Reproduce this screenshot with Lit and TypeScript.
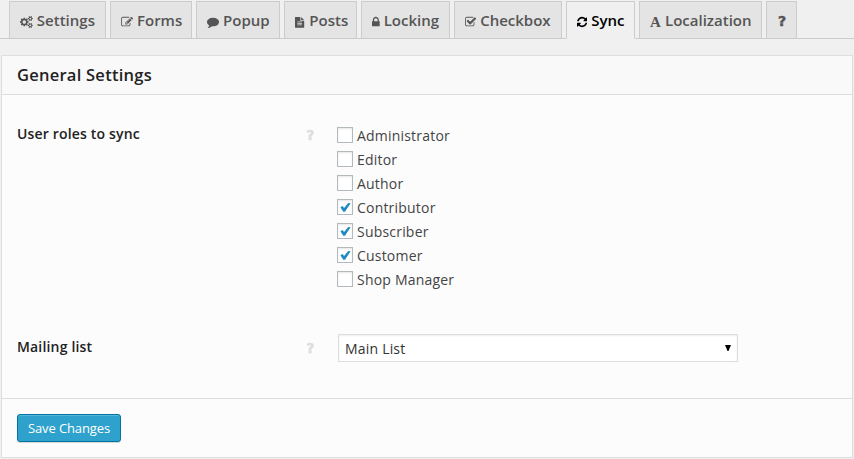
import { LitElement, html, css, svg, nothing } from "lit";
import { customElement, state } from "lit/decorators.js";

interface Icon {
  box: string;
  width: number;
  d: string;
}

const gear =
  "q0 16-149 31-12 27-30 52 51 113 51 138 0 4-4 7-122 71-124 71-8 0-46-47t-52-68q-20 2-30 2t-30-2q-14 21-52 68t-46 47q-2 0-124-71-4-3-4-7 0-25 51-138-18-25-30-52-149-15-149-31v-140q0-16 149-31 13-29 30-52-51-113-51-138 0-4 4-7 4-2 35-20t59-34 30-16q8 0 46 46.5t52 67.5q20-2 30-2t30 2q51-71 92-112l6-2q4 0 124 70 4 3 4 7 0 25-51 138 17 23 30 52 149 15 149 31z";

const icons: Record<string, Icon> = {
  cogs: {
    box: "0 0 1920 1792",
    width: 12.86,
    d:
      "M896 896q0-106-75-181t-181-75-181 75-75 181 75 181 181 75 181-75 75-181zm768 512q0-52-38-90t-90-38-90 38-38 90q0 53 37.5 90.5t90.5 37.5 90.5-37.5 37.5-90.5zm0-1024q0-52-38-90t-90-38-90 38-38 90q0 53 37.5 90.5t90.5 37.5 90.5-37.5 37.5-90.5zm-384 421v185q0 10-7 19.5t-16 10.5l-155 24q-11 35-32 76 34 48 90 115 7 11 7 20 0 12-7 19-23 30-82.5 89.5t-78.5 59.5q-11 0-21-7l-115-90q-37 19-77 31-11 108-23 155-7 24-30 24h-186q-11 0-20-7.5t-10-17.5l-23-153q-34-10-75-31l-118 89q-7 7-20 7-11 0-21-8-144-133-144-160 0-9 7-19 10-14 41-53t47-61q-23-44-35-82l-152-24q-10-1-17-9.5t-7-19.5v-185q0-10 7-19.5t16-10.5l155-24q11-35 32-76-34-48-90-115-7-11-7-20 0-12 7-20 22-30 82-89t79-59q11 0 21 7l115 90q34-18 77-32 11-108 23-154 7-24 30-24h186q11 0 20 7.5t10 17.5l23 153q34 10 75 31l118-89q8-7 20-7 11 0 21 8 144 133 144 160 0 8-7 19-12 16-42 54t-45 60q23 48 34 82l152 23q10 2 17 10.5t7 19.5zM1920 1338v140" +
      gear +
      "M1920 314v140" +
      gear,
  },
  edit: {
    box: "0 0 1792 1792",
    width: 12,
    d: "M888 1184l116-116-152-152-116 116v56h96v96h56zm440-720q-16-16-33 1l-350 350q-17 17-1 33t33-1l350-350q17-17 1-33zm80 594v190q0 119-84.5 203.5t-203.5 84.5h-832q-119 0-203.5-84.5t-84.5-203.5v-832q0-119 84.5-203.5t203.5-84.5h832q63 0 117 25 15 7 18 23 3 17-9 29l-49 49q-14 14-32 8-23-6-45-6h-832q-66 0-113 47t-47 113v832q0 66 47 113t113 47h832q66 0 113-47t47-113v-126q0-13 9-22l64-64q15-15 35-7t20 29zm-96-738l288 288-672 672h-288v-288zm444 132l-92 92-288-288 92-92q28-28 68-28t68 28l152 152q28 28 28 68t-28 68z",
  },
  comment: {
    box: "0 0 1792 1792",
    width: 12,
    d: "M1792 896q0 174-120 321.5t-326 233-450 85.5q-70 0-145-8-198 175-460 242-49 14-114 22-17 2-30.5-9t-17.5-29v-1q-3-4-.5-12t2-10 4.5-9.5l6-9 7-8.5 8-9q7-8 31-34.5t34.5-38 31-39.5 32.5-51 27-59 26-76q-157-89-247.5-220t-90.5-281q0-130 71-248.5t191-204.5 286-136.5 348-50.5 348 50.5 286 136.5 191 204.5 71 248.5z",
  },
  file: {
    box: "128 -150 1716 2002",
    width: 10.29,
    d: "M1596 476q14 14 28 36h-472v-472q22 14 36 28zm-476 164h544v1056q0 40-28 68t-68 28h-1344q-40 0-68-28t-28-68v-1600q0-40 28-68t68-28h800v544q0 40 28 68t68 28zm160 736v-64q0-14-9-23t-23-9h-704q-14 0-23 9t-9 23v64q0 14 9 23t23 9h704q14 0 23-9t9-23zm0-256v-64q0-14-9-23t-23-9h-704q-14 0-23 9t-9 23v64q0 14 9 23t23 9h704q14 0 23-9t9-23zm0-256v-64q0-14-9-23t-23-9h-704q-14 0-23 9t-9 23v64q0 14 9 23t23 9h704q14 0 23-9t9-23z",
  },
  lock: {
    box: "320 0 1152 1792",
    width: 7.71,
    d: "M640 768h512v-192q0-106-75-181t-181-75-181 75-75 181v192zm832 96v576q0 40-28 68t-68 28h-960q-40 0-68-28t-28-68v-576q0-40 28-68t68-28h32v-192q0-184 132-316t316-132 316 132 132 316v192h32q40 0 68 28t28 68z",
  },
  check: {
    box: "64 0 1664 1792",
    width: 11.14,
    d: "M1472 930v318q0 119-84.5 203.5t-203.5 84.5h-832q-119 0-203.5-84.5t-84.5-203.5v-832q0-119 84.5-203.5t203.5-84.5h832q63 0 117 25 15 7 18 23 3 17-9 29l-49 49q-10 10-23 10-3 0-9-2-23-6-45-6h-832q-66 0-113 47t-47 113v832q0 66 47 113t113 47h832q66 0 113-47t47-113v-254q0-13 9-22l64-64q10-10 23-10 6 0 12 3 20 8 20 29zm231-489l-814 814q-24 24-57 24t-57-24l-430-430q-24-24-24-57t24-57l110-110q24-24 57-24t57 24l263 263 647-647q24-24 57-24t57 24l110 110q24 24 24 57t-24 57z",
  },
  refresh: {
    box: "128 0 1536 1792",
    width: 10.29,
    d: "M1639 1056q0 5-1 7-64 268-268 434.5t-478 166.5q-146 0-282.5-55t-243.5-157l-129 129q-19 19-45 19t-45-19-19-45v-448q0-26 19-45t45-19h448q26 0 45 19t19 45-19 45l-137 137q71 66 161 102t187 36q134 0 250-65t186-179q11-17 53-117 8-23 30-23h192q13 0 22.5 9.5t9.5 22.5zm25-800v448q0 26-19 45t-45 19h-448q-26 0-45-19t-19-45 19-45l138-138q-148-137-349-137-134 0-250 65t-186 179q-11 17-53 117-8 23-30 23h-199q-13 0-22.5-9.5t-9.5-22.5v-7q65-268 270-434.5t480-166.5q146 0 284 55.5t245 156.5l130-129q19-19 45-19t45 19 19 45z",
  },
};

interface Tab {
  id: string;
  icon?: string;
  letter?: string;
  label?: string;
  width: number;
}

const tabs: Tab[] = [
  { id: "settings", icon: "cogs", label: "Settings", width: 97 },
  { id: "forms", icon: "edit", label: "Forms", width: 82 },
  { id: "popup", icon: "comment", label: "Popup", width: 84 },
  { id: "posts", icon: "file", label: "Posts", width: 73 },
  { id: "locking", icon: "lock", label: "Locking", width: 89 },
  { id: "checkbox", icon: "check", label: "Checkbox", width: 108 },
  { id: "sync", icon: "refresh", label: "Sync", width: 69 },
  { id: "localization", letter: "A", label: "Localization", width: 123 },
  { id: "help", letter: "?", width: 31 },
];

@customElement("app-root")
export class AppRoot extends LitElement {
  @state() private active = "sync";
  @state() private roles = [
    { name: "Administrator", on: false },
    { name: "Editor", on: false },
    { name: "Author", on: false },
    { name: "Contributor", on: true },
    { name: "Subscriber", on: true },
    { name: "Customer", on: true },
    { name: "Shop Manager", on: false },
  ];

  static styles = css`
    :host {
      display: flex;
      flex-direction: column;
      box-sizing: border-box;
      height: 459px;
      overflow: hidden;
      background: #f0f0f0;
      color: #444;
      font: 14px/24px "Open Sans", sans-serif;
    }
    * {
      box-sizing: border-box;
    }
    .tabs {
      display: flex;
      gap: 4px;
      height: 39px;
      padding: 1px 0 0 9px;
      border-bottom: 1px solid #ccc;
      flex: none;
    }
    .tab {
      display: flex;
      align-items: center;
      height: 38px;
      padding: 0 0 0 10px;
      border: 1px solid #ccc;
      background: #e4e4e4;
      color: #555;
      font: 600 15px/24px "Open Sans", sans-serif;
      white-space: nowrap;
      cursor: pointer;
    }
    .tab.active {
      background: #f0f0f0;
      border-bottom-color: #f0f0f0;
      color: #000;
    }
    .icon {
      flex: none;
      height: 12px;
      margin: 3px 4px 0 0;
      fill: currentColor;
    }
    .serif {
      width: 11px;
      margin: 3px 4px 0 0;
      font: bold 15px/20px "Liberation Serif", serif;
    }
    .mark {
      width: 9px;
      margin: 1px 0 0 1px;
      font: bold 14px/20px "DejaVu Sans", sans-serif;
      -webkit-text-stroke: 0.5px currentColor;
    }
    .panel {
      display: flex;
      flex-direction: column;
      height: 403px;
      margin: 16px 1px 0 1px;
      border: 1px solid #dedede;
      background: #fcfcfc;
    }
    .title {
      height: 39px;
      margin: 0;
      padding: 0 15px;
      border-bottom: 1px solid #dedede;
      background: #f9f9f9;
      color: #222;
      font: 600 16.5px/38px "Open Sans", sans-serif;
      letter-spacing: 0.25px;
    }
    .body {
      flex: 1;
      padding: 28px 15px 0;
    }
    .row {
      display: grid;
      grid-template-columns: 289px 31px 1fr;
    }
    .row + .row {
      margin-top: 45px;
    }
    .name {
      color: #222;
      font-weight: 600;
      line-height: 22px;
      letter-spacing: 0.17px;
    }
    .hint {
      padding: 1px 0 0 0.5px;
      color: #ddd;
      font: bold 13.5px/22px "DejaVu Sans", sans-serif;
      -webkit-text-stroke: 0.5px currentColor;
    }
    .role {
      display: flex;
      gap: 4px;
      height: 24px;
      padding-top: 4px;
      line-height: 17px;
      letter-spacing: 0.2px;
    }
    .box {
      width: 16px;
      height: 16px;
      flex: none;
      border: 1px solid #b4b9be;
      background: #fff;
      box-shadow: inset 0 1px 2px rgba(0, 0, 0, 0.1);
    }
    .tick {
      display: block;
      width: 14px;
      height: 14px;
      fill: #1e8cbe;
    }
    .select {
      display: flex;
      align-items: center;
      justify-content: space-between;
      width: 400px;
      height: 28px;
      margin: -2px 0 0 1px;
      padding: 1px 6px 0;
      border: 1px solid #ddd;
      background: #fff;
      box-shadow: inset 0 1px 2px rgba(0, 0, 0, 0.07);
      color: #333;
      letter-spacing: 0.2px;
    }
    .arrow {
      width: 6px;
      height: 6px;
      margin-top: -1px;
      fill: #000;
    }
    .footer {
      height: 59px;
      padding: 15px 15px 0;
      border-top: 1px solid #dedede;
    }
    .save {
      display: block;
      width: 104px;
      height: 28px;
      padding: 0;
      border: 1px solid #0074a2;
      border-radius: 3px;
      background: #2ea2cc;
      box-shadow: inset 0 1px 0 rgba(120, 200, 230, 0.5), 0 1px 0 rgba(0, 0, 0, 0.15);
      color: #fff;
      font: 13px/26px "Open Sans", sans-serif;
      letter-spacing: -0.1px;
      text-align: center;
    }
  `;

  private renderTab(tab: Tab) {
    const icon = tab.icon ? icons[tab.icon] : undefined;
    return html`<div
      class="tab ${tab.id === this.active ? "active" : ""}"
      style="width:${tab.width}px"
      @click=${() => (this.active = tab.id)}
    >
      ${icon
        ? html`<svg class="icon" width=${icon.width} height="12" viewBox=${icon.box}>
            ${svg`<path d=${icon.d}></path>`}
          </svg>`
        : html`<span class=${tab.letter === "A" ? "serif" : "mark"}>${tab.letter}</span>`}
      ${tab.label ? html`<span>${tab.label}</span>` : nothing}
    </div>`;
  }

  private toggle(index: number) {
    this.roles = this.roles.map((r, i) => (i === index ? { ...r, on: !r.on } : r));
  }

  render() {
    return html`
      <nav class="tabs">${tabs.map((t) => this.renderTab(t))}</nav>
      <section class="panel">
        <h3 class="title">General Settings</h3>
        <div class="body">
          <div class="row">
            <span class="name">User roles to sync</span>
            <span class="hint">?</span>
            <div>
              ${this.roles.map(
                (r, i) => html`<div class="role" @click=${() => this.toggle(i)}>
                  <span class="box"
                    >${r.on
                      ? html`<svg class="tick" viewBox="0 0 14 14">
                          <path d="M2.4 7.2 4.6 6 6.1 8 10.2 3 12.6 3.3 7 11.7 5.3 11.7z"></path>
                        </svg>`
                      : nothing}</span
                  >
                  <span>${r.name}</span>
                </div>`
              )}
            </div>
          </div>
          <div class="row">
            <span class="name">Mailing list</span>
            <span class="hint">?</span>
            <div class="select">
              <span>Main List</span>
              <svg class="arrow" viewBox="0 0 6 6"><path d="M0 0h6L3.5 6h-1z"></path></svg>
            </div>
          </div>
        </div>
        <div class="footer"><button class="save">Save Changes</button></div>
      </section>
    `;
  }
}
